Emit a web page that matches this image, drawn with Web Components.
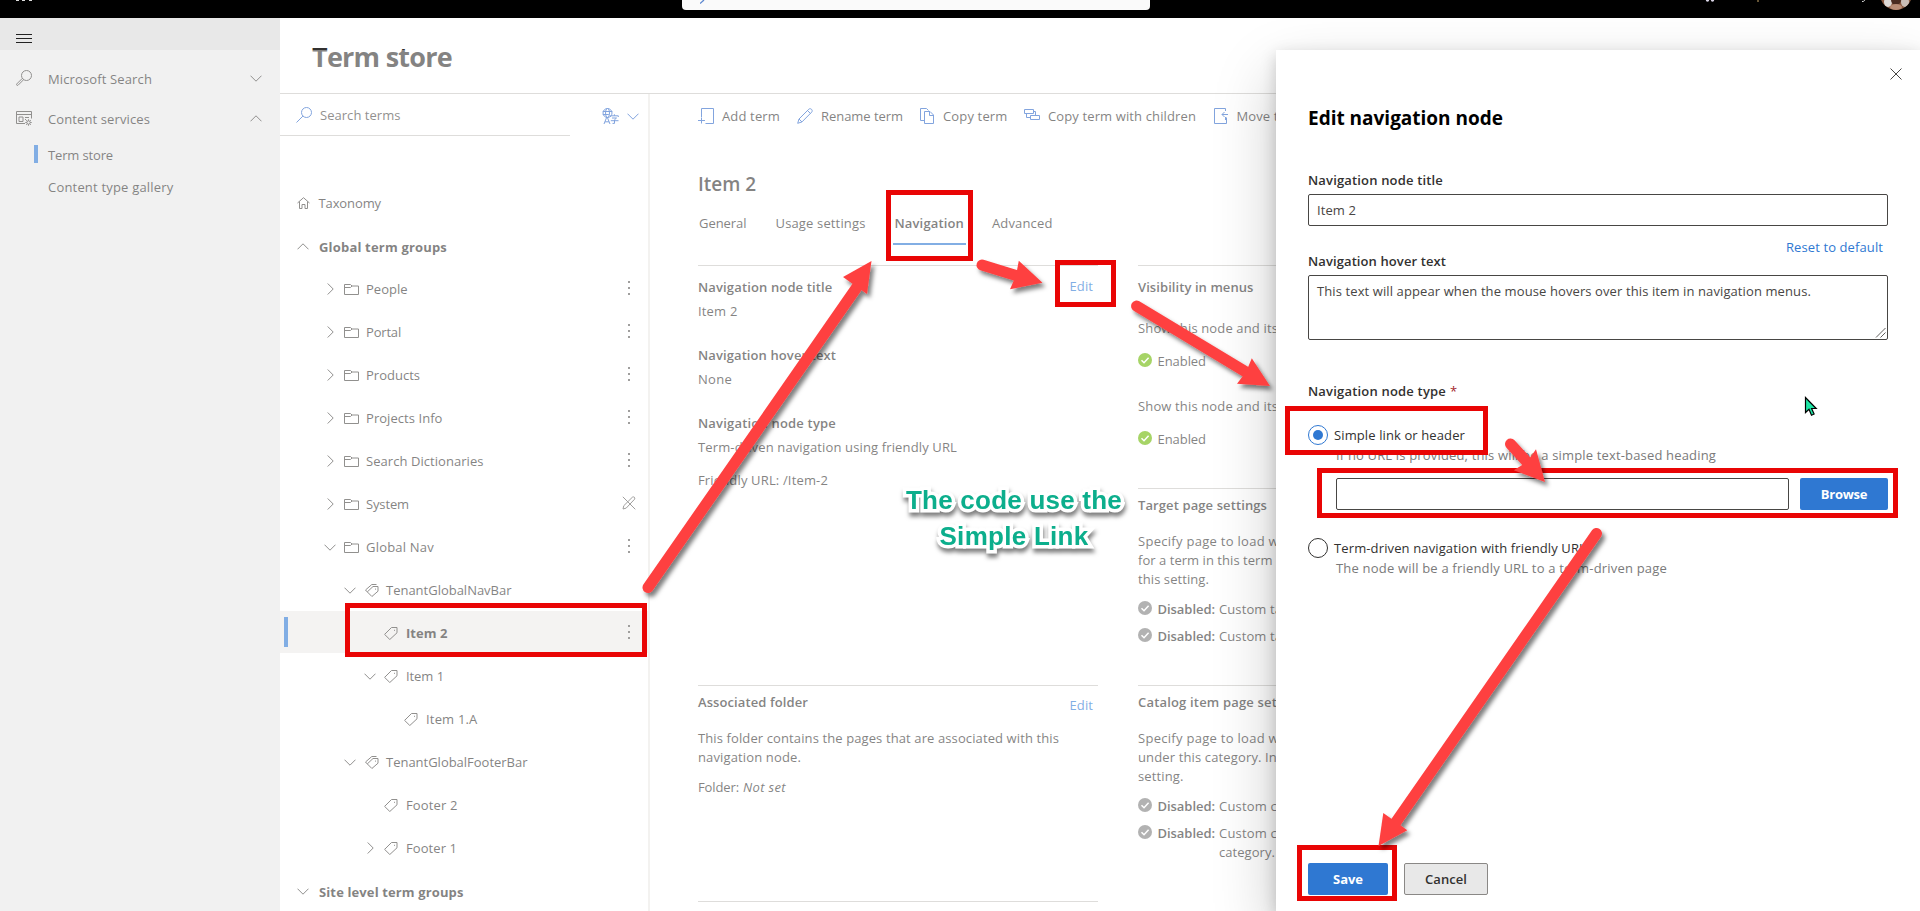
<!DOCTYPE html>
<html lang="en">
<head>
<meta charset="utf-8">
<title>Term store</title>
<style>
html,body{margin:0;padding:0;height:911px;overflow:hidden;background:#fff}
body{font:13px/20px "Open Sans","Noto Sans",sans-serif;color:#323130}
</style>
</head>
<body>
<term-app></term-app>
<script>
const define=(name,html,after)=>customElements.define(name,class extends HTMLElement{
  connectedCallback(){
    if(this.shadowRoot)return;
    this.attachShadow({mode:'open'}).innerHTML=typeof html==='function'?html(this):html;
    if(after)after(this);
  }
});

/* Text run spread to a given width through letter spacing */
const runs=[];
define('t-x',e=>`<style>:host{display:inline-block;white-space:pre;width:${e.getAttribute('w')}px;flex:none}</style><span><slot></slot></span>`,e=>runs.push(e));
const fitRuns=()=>runs.forEach(e=>{
  const s=e.shadowRoot.querySelector('span'),w=s.getBoundingClientRect().width,n=e.textContent.length;
  if(w)s.style.letterSpacing=((+e.getAttribute('w')-w)/n).toFixed(3)+'px';
});

const icons={
  down:[12,7,'<path d="M.5.7 6 6.2 11.5.7"/>'],
  up:[12,7,'<path d="M.5 6.3 6 .8l5.500 5.500"/>'],
  right:[7,12,'<path d="M.7.5 6.200 6 .7 11.500"/>'],
  menu:[16,9,'<path d="M0 .5h16M0 4.500h16M0 8.500h16"/>'],
  search:[16,16,'<circle cx="10.500" cy="5.500" r="5"/><path d="M6.900 9.100.5 15.500"/>'],
  glass:[16,16,'<circle cx="10.500" cy="5.500" r="5"/><path d="M6.400 8.300.7 14c-.5 1 .4 1.800 1.300 1.300l5.700-5.700"/>'],
  content:[16,15,'<path d="M9 12.500H.5V.5h15v7M.5 3.500h15M3 6h4v4.500H3zM9 6.500h4M9 8.500h1"/><circle cx="12.500" cy="11.500" r="1.700"/><path d="M12.500 8.300v1.500M12.500 13.200v1.500M9.300 11.500h1.500M14.200 11.500h1.500M10.200 9.200l1.100 1.100M13.700 12.700l1.100 1.100M10.200 13.800l1.100-1.100M13.700 10.300l1.100-1.100"/>'],
  home:[13,12,'<path d="M.5 6 6.500.7 12.500 6M2.500 4.500v7H5V7.500h3v4h2.500v-7"/>'],
  folder:[15,11,'<path d="M.5 10.500V.5h6l1.500 1.500h6.500v8.500zM.5 3.500h6l1.500-1.500"/>'],
  tag:[14,13,'<path d="M7.500.5h5.500v5.300L5.800 12.500.6 7.400z"/><path d="M10.500 2.800v1" />'],
  tags:[14,13,'<path d="M8 2.500h5v4.700L6.900 12.500 2.300 7.900z"/><path d="M11.500.5H6.800L.5 6l1.900 2M10.500 4.600v1"/>'],
  locked:[14,14,'<path d="M1 13l.8-3.300L10.400 1.200c1.500-1 3 .5 2.200 2L4.200 12.100zM.8.8l12.500 12.500"/>'],
  dots:[2,14,'<path d="M1 0v2M1 6v2M1 12v2" stroke-width="2"/>'],
  translate:[17,17,'<circle cx="5.500" cy="5" r="4.500"/><ellipse cx="5.500" cy="5" rx="2" ry="4.500"/><path d="M.8 3.500h9.500M.8 6.500h6M2 16l2.800-7h.4L8 16M3 13.800h4M8.500 9V7.800h7.800V9M12.400 6.300v1.500M10 10h4.500l-2 1.800v3.600h-2M8.800 12.700h7.700"/>'],
  add:[16,16,'<path d="M3.500 9V.5h12v15h-8M3.500 9.500v6M0 12.500h7"/>'],
  pen:[16,16,'<path d="M.7 15.300 2 11 11.800 1.200c1.800-1.600 4.500 1 2.900 2.900L5 13.900zM10.500 2.500l3 3M2 11l3 3"/>'],
  copy:[14,16,'<path d="M4.500 12.500h-4V.5h6l2 2M4.500 3.500h5.500l3.500 3.500v8.500h-9zM9.500 3.500V7.500h4"/>'],
  copytree:[17,12,'<path d="M.5.5h9v4h-9zM6.500 6.500h9v4h-9zM2.500 4.500v4h4M9.500 2.500h2v4"/>'],
  move:[15,16,'<path d="M11.500 3V.5H.5v15h11M11.500 9v3M8 6.500h6M10.500 4 8 6.500 10.500 9M12.500 9.500v6h-3"/>'],
  close:[12,12,'<path d="M.5.5l11 11M11.500.5l-11 11"/>'],
  ok:[14,14,'<circle cx="7" cy="7" r="7" fill="currentColor" stroke="none"/><path d="M3.500 7.300 6 9.700l4.600-5" stroke="#fff" stroke-width="1.500"/>'],
  grip:[11,11,'<path d="M1 10.500 10.500 1M5.500 10.500 10.500 5.500"/>']
};
define('ui-icon',e=>{const [w,h,p]=icons[e.getAttribute('name')];
  return `<style>:host{display:inline-flex;flex:none}svg{display:block}</style><svg width="${w}" height="${h}" viewBox="0 0 ${w} ${h}" fill="none" stroke="currentColor">${p}</svg>`});

define('top-bar',`<style>
:host{display:grid;grid-template-columns:682px 468px 1fr;height:18px;background:#000;position:relative;z-index:3;overflow:hidden}
.w{display:flex;gap:3.500px;padding-left:15.500px}.w i{width:3px;height:1px;background:#ddd}
.s{height:10px;background:#fafafa;border-radius:0 0 4px 4px}
.s svg{display:block;margin-left:18px}
.r{display:flex;justify-content:flex-end;padding-right:8px}.r svg{display:block}
</style><div class="w"><i></i><i></i><i></i></div><div class="s"><svg width="6" height="4"><path d="M0 3.500 4 0" stroke="#5b86cf" stroke-width="1.300"/></svg></div>
<div class="r"><svg width="222" height="12" viewBox="1690 0 222 12"><circle cx="1707.500" cy="0" r="1.700" fill="#dcd8ea"/><circle cx="1712.500" cy="0" r="1.700" fill="#d9d3e4"/><path d="M1757 1h2" stroke="#c9a86a"/><path d="M1862 1.500c2 0 2-.5 3-1.500" stroke="#ddd" fill="none"/>
<clipPath id="c"><circle cx="1896" cy="-6" r="16"/></clipPath><g clip-path="url(#c)"><path d="M1880-10h32v22h-32z" fill="#8a5a41"/><ellipse cx="1888" cy="2" rx="4" ry="5" fill="#ddd9d6"/><ellipse cx="1905" cy="2" rx="4" ry="5" fill="#c9bdb5"/><ellipse cx="1896" cy="0" rx="5" ry="5" fill="#4a2b20"/><ellipse cx="1896" cy="7" rx="6" ry="3" fill="#b98d76"/></g></svg></div>`);

define('side-nav',`<style>
:host{display:flex;flex-direction:column;background:#e8e8e8}
.m{height:32px;box-sizing:border-box;padding:16px 16px 0;display:flex}
.g{display:flex;align-items:center;height:40px;padding:0 18px 0 16px;color:#323130}
.g ui-icon:first-child{width:16px;margin-right:16px}
.g ui-icon:last-child{margin-left:auto}
.s{display:flex;align-items:center;height:32px;padding-left:34px}
.s i{width:4px;height:18px;margin-right:10px}.s i.on{background:#2f78d2}
t-x{padding-top:2px}
ui-icon{color:#484644}
</style><div class="m"><ui-icon name="menu" style="color:#222"></ui-icon></div>
<div class="g" style="margin-top:8px"><ui-icon name="glass"></ui-icon><t-x w="104">Microsoft Search</t-x><ui-icon name="down"></ui-icon></div>
<div class="g"><ui-icon name="content"></ui-icon><t-x w="102">Content services</t-x><ui-icon name="up"></ui-icon></div>
<div class="s"><i class="on"></i><t-x w="65">Term store</t-x></div>
<div class="s"><i></i><t-x w="125.500">Content type gallery</t-x></div>`);

define('tree-row',e=>{const a=n=>e.getAttribute(n),on=a('on')!==null,b=a('b')!==null;
 return `<style>:host{display:block;height:43px}
.r{display:flex;align-items:center;height:42px;box-sizing:border-box;padding:2px 17px 0 4px;${on?'background:#edebe9;':''}}
.b{width:4px;height:30px;margin-top:-2px;${on?'background:#2f78d2':''}}
.c{width:12px;display:flex;justify-content:center;margin-left:${a('x')-288}px;margin-right:${a('gap')||5}px}
.i{width:${a('icon')?a('iw')||20:0}px;display:flex;flex:none}.e{margin-left:auto;display:flex;width:14px;justify-content:center;margin-right:-5px;margin-top:-2px}
ui-icon{color:#484644}.e ui-icon{color:#605e5c}t-x{font-weight:${b?700:400};${b&&!on?'padding-top:1px':''}}</style>
<div class="r"><div class="b"></div><div class="c">${a('c')?`<ui-icon name="${a('c')}"></ui-icon>`:''}</div><div class="i">${a('icon')?`<ui-icon name="${a('icon')}"></ui-icon>`:''}</div><t-x w="${a('w')}"><slot></slot></t-x>${a('end')?`<div class="e"><ui-icon name="${a('end')}"></ui-icon></div>`:''}</div>`},
 e=>{const t=e.shadowRoot.querySelector('t-x');t.textContent=e.textContent;});

define('term-tree',`<style>:host{display:block;border-right:2px solid #ebe9e7}
.s{display:flex;align-items:center;height:42px;box-sizing:border-box;width:289.500px;border-bottom:1px solid #c8c6c4;padding-left:16px;gap:8px}
.top{display:flex;height:87px}.t{display:flex;align-items:center;gap:8px;height:44px;margin-left:32px;color:#2f68c8}
.s ui-icon{color:#2f68c8}.s t-x{color:#484644}</style>
<div class="top"><div class="s"><ui-icon name="search"></ui-icon><t-x w="80.500">Search terms</t-x></div><div class="t"><ui-icon name="translate"></ui-icon><ui-icon name="down"></ui-icon></div></div>
<tree-row x="297" c="home" gap="9.500" w="62.500">Taxonomy</tree-row>
<tree-row x="297" c="up" gap="10" w="128" b>Global term groups</tree-row>
<tree-row x="324" c="right" gap="7.500" icon="folder" iw="22.500" end="dots" w="41.500">People</tree-row>
<tree-row x="324" c="right" gap="7.500" icon="folder" iw="22.500" end="dots" w="35">Portal</tree-row>
<tree-row x="324" c="right" gap="7.500" icon="folder" iw="22.500" end="dots" w="54">Products</tree-row>
<tree-row x="324" c="right" gap="7.500" icon="folder" iw="22.500" end="dots" w="76.500">Projects Info</tree-row>
<tree-row x="324" c="right" gap="7.500" icon="folder" iw="22.500" end="dots" w="117.500">Search Dictionaries</tree-row>
<tree-row x="324" c="right" gap="7.500" icon="folder" iw="22.500" end="locked" w="43">System</tree-row>
<tree-row x="324" c="down" gap="7.500" icon="folder" iw="22.500" end="dots" w="68">Global Nav</tree-row>
<tree-row x="344" c="down" gap="8.500" icon="tags" iw="21.500" w="125.500">TenantGlobalNavBar</tree-row>
<tree-row x="364" gap="8" icon="tag" iw="22" end="dots" w="41.500" b on>Item 2</tree-row>
<tree-row x="364" c="down" gap="8" icon="tag" iw="22" w="38">Item 1</tree-row>
<tree-row x="384" gap="8" icon="tag" iw="22" w="51.500">Item 1.A</tree-row>
<tree-row x="344" c="down" gap="8.500" icon="tags" iw="21.500" w="141.500">TenantGlobalFooterBar</tree-row>
<tree-row x="364" gap="8" icon="tag" iw="22" w="51.500">Footer 2</tree-row>
<tree-row x="364" c="right" gap="8" icon="tag" iw="22" w="51">Footer 1</tree-row>
<tree-row x="297" c="down" gap="10" w="144.500" b>Site level term groups</tree-row>`);

define('info-field',e=>`<style>:host{display:block;height:68px}b{font-weight:550;display:block;height:24px}</style><b><t-x w="${e.getAttribute('lw')}">${e.getAttribute('label')}</t-x></b><slot></slot>`);
define('info-card',e=>`<style>:host{display:block;border-top:1px solid #c8c6c4;box-sizing:border-box;height:${e.getAttribute('h')}px;padding-top:${e.getAttribute('p')||6}px}
.h{display:flex;justify-content:space-between;height:20px;margin-bottom:${e.getAttribute('mb')||17}px}b{font-weight:550}a{color:#2f78d2;margin:${e.getAttribute('et')||0}px 5px 0 0}</style>
<div class="h"><b><t-x w="${e.getAttribute('tw')}">${e.getAttribute('head')}</t-x></b>${e.getAttribute('et')?'<a><t-x w="23.500">Edit</t-x></a>':''}</div><slot></slot>`);
define('status-line',e=>`<style>:host{display:flex;height:20px;align-items:center}ui-icon{color:${e.getAttribute('c')};margin:0 5.500px 0 0;position:relative;top:-1px}b{font-weight:600;margin-right:4px}</style><ui-icon name="ok"></ui-icon>${e.getAttribute('b')!==null?'<b><t-x w="57.500">Disabled:</t-x></b>':''}<slot></slot>`);

define('term-detail',`<style>:host{display:block;padding-left:48px;overflow:hidden;white-space:nowrap}
.bar{display:flex;height:44px;align-items:center}.bar div{display:flex;align-items:center;flex:none}.bar ui-icon{color:#2f68c8}
.bar t-x{color:#323130}
h2{margin:32px 0 0;font:550 19px/28px "Open Sans",sans-serif;height:28px}
.tabs{display:flex;height:67px;box-sizing:border-box;padding-top:13px;margin-left:1px}
.tabs div{height:26px;padding-top:2px;margin-right:29px}
.tabs .on{font-weight:550;border-bottom:2px solid #2f78d2;padding:2px 2px 0;margin:0 26px 0 -2px;height:30px}
.cols{display:grid;grid-template-columns:400px 400px;gap:40px}
p{margin:0;line-height:19px}
</style>
<div class="bar"><div style="width:99px"><ui-icon name="add" style="margin-right:8px"></ui-icon><t-x w="58">Add term</t-x></div>
<div style="width:123px"><ui-icon name="pen" style="margin-right:8px"></ui-icon><t-x w="82">Rename term</t-x></div>
<div style="width:104px"><ui-icon name="copy" style="margin-right:9px"></ui-icon><t-x w="64.500">Copy term</t-x></div>
<div style="width:190px"><ui-icon name="copytree" style="margin-right:7px;position:relative;top:-1px"></ui-icon><t-x w="148">Copy term with children</t-x></div>
<div><ui-icon name="move" style="margin-right:7.500px"></ui-icon><t-x w="42">Move t</t-x></div></div>
<h2><t-x w="58">Item 2</t-x></h2>
<div class="tabs"><div><t-x w="47.500">General</t-x></div><div><t-x w="90">Usage settings</t-x></div><div class="on"><t-x w="69.500">Navigation</t-x></div><div><t-x w="60.500">Advanced</t-x></div></div>
<div class="cols"><div>
<info-card h="420" p="11" mb="4" et="-1" tw="134.500" head="Navigation node title"><div style="height:44px"><t-x w="39.500">Item 2</t-x></div>
<info-field label="Navigation hover text" lw="138"><t-x w="34">None</t-x></info-field>
<info-field label="Navigation node type" lw="138"><t-x w="259">Term-driven navigation using friendly URL</t-x><div style="margin-top:13px"><t-x w="130">Friendly URL: /Item-2</t-x></div></info-field></info-card>
<info-card h="216" et="3" tw="110" head="Associated folder"><p><t-x w="361">This folder contains the pages that are associated with this</t-x></p><p><t-x w="103">navigation node.</t-x></p><p style="margin-top:11px;display:flex;gap:4px"><t-x w="41">Folder:</t-x><i><t-x w="43">Not set</t-x></i></p></info-card>
<info-card h="20" tw="1" head=""></info-card>
</div><div>
<info-card h="223" p="11" mb="22" tw="115.500" head="Visibility in menus"><p><t-x w="140">Show this node and its</t-x></p><status-line c="#6bb700" style="margin-top:13px"><t-x w="48.500">Enabled</t-x></status-line><p style="margin-top:26px"><t-x w="140">Show this node and its</t-x></p><status-line c="#6bb700" style="margin-top:13px"><t-x w="48.500">Enabled</t-x></status-line></info-card>
<info-card h="197" tw="129" head="Target page settings"><p><t-x w="141">Specify page to load w</t-x></p><p><t-x w="134.500">for a term in this term</t-x></p><p><t-x w="71">this setting.</t-x></p><status-line b c="#7f7f7f" style="margin-top:10px"><t-x w="63">Custom ta</t-x></status-line><status-line b c="#7f7f7f" style="margin-top:7px"><t-x w="63">Custom ta</t-x></status-line></info-card>
<info-card h="226" tw="139" head="Catalog item page set"><p><t-x w="141">Specify page to load w</t-x></p><p><t-x w="139">under this category. In</t-x></p><p><t-x w="45.500">setting.</t-x></p><status-line b c="#7f7f7f" style="margin-top:10px"><t-x w="58">Custom c</t-x></status-line><status-line b c="#7f7f7f" style="margin-top:7px"><t-x w="58">Custom c</t-x></status-line><p style="padding-left:81px"><t-x w="56">category.</t-x></p></info-card>
</div></div>`);

define('radio-row',e=>`<style>:host{display:flex;height:20px;align-items:center}
i{box-sizing:border-box;width:20px;height:20px;border-radius:50%;border:1px solid ${e.hasAttribute('on')?'#2f78d2':'#323130'};margin-right:6px;display:grid;place-items:center}
i::after{content:"";width:10px;height:10px;border-radius:50%;background:${e.hasAttribute('on')?'#2f78d2':'none'}}</style><i></i><slot></slot>`);
define('ui-button',`<style>:host{display:flex;align-items:center;justify-content:center;box-sizing:border-box;height:32px;border-radius:2px;background:#2f78d2;color:#fff;font-weight:700}
:host([plain]){background:#e8e8e8;border:1px solid #8a8886;color:#323130;font-weight:600}</style><slot></slot>`);

define('edit-panel',`<style>:host{position:absolute;top:50px;right:0;bottom:0;width:644px;box-sizing:border-box;padding:18px 32px 16px;background:#fff;display:flex;flex-direction:column;box-shadow:0 26px 58px rgba(0,0,0,.22),0 5px 15px rgba(0,0,0,.18)}
.x{display:flex;justify-content:flex-end;margin-right:-14px;height:12px;color:#484644}
h1{margin:24px 0 38px;font:700 19px/28px "Open Sans",sans-serif;color:#000}
label{font-weight:550;display:block;height:20px}
.in{box-sizing:border-box;border:1px solid #484644;border-radius:2px;height:32px;padding:5px 8px;margin-top:4px;position:relative;color:#484644}
.in.a{height:65px}.in ui-icon{position:absolute;right:1px;bottom:1px;color:#605e5c}
.rs{text-align:right;color:#2f78d2;margin:11px 5px 0 0;height:14px}
.h{color:#7a7a7a;padding-left:28px;height:20px}
.u{display:grid;grid-template-columns:453px 88px;gap:11px;margin:13px 0 28px 28px}.u .in{margin:0}
.f{display:flex;gap:16px;margin-top:auto}
</style>
<div class="x"><ui-icon name="close"></ui-icon></div>
<h1><t-x w="195">Edit navigation node</t-x></h1>
<label><t-x w="135">Navigation node title</t-x></label>
<div class="in"><t-x w="39">Item 2</t-x></div>
<div class="rs"><t-x w="97">Reset to default</t-x></div>
<label><t-x w="138">Navigation hover text</t-x></label>
<div class="in a"><t-x w="494">This text will appear when the mouse hovers over this item in navigation menus.</t-x><ui-icon name="grip"></ui-icon></div>
<label style="margin-top:41px"><t-x w="138">Navigation node type</t-x><span style="color:#a4262c;margin-left:4px;font-weight:400">*</span></label>
<radio-row on style="margin-top:24px"><t-x w="131">Simple link or header</t-x></radio-row>
<div class="h"><t-x w="380">If no URL is provided, this will be a simple text-based heading</t-x></div>
<div class="u"><div class="in"></div><ui-button><t-x w="46.500">Browse</t-x></ui-button></div>
<radio-row><t-x w="252">Term-driven navigation with friendly URL</t-x></radio-row>
<div class="h"><t-x w="331">The node will be a friendly URL to a term-driven page</t-x></div>
<div class="f"><ui-button style="width:80px"><t-x w="30">Save</t-x></ui-button><ui-button plain style="width:84px"><t-x w="42">Cancel</t-x></ui-button></div>`);

/* Free-canvas markup: boxes, arrows, callout and pointer */
const arrow=(x,y,bx,by,tx,ty,ax,ay,cx,cy)=>`<g filter="url(#s)"><path d="M${x} ${y}L${bx} ${by}" stroke="#fe4141" stroke-width="11" stroke-linecap="round"/><path d="M${tx} ${ty}L${ax} ${ay}L${bx} ${by}L${cx} ${cy}z" fill="#fe4141"/></g>`;
const box=(x,y,x2,y2)=>`<rect x="${x+2.5}" y="${y+2.5}" width="${x2-x-5}" height="${y2-y-5}" fill="none" stroke="#e90505" stroke-width="5"/>`;
define('mark-up',`<style>:host{position:absolute;inset:0;z-index:4}svg{position:absolute;inset:0}
.c{position:absolute;left:904px;top:482px;width:220px;display:flex;flex-direction:column;align-items:center;font:700 26px/36px "Liberation Sans",sans-serif;color:#0cae8c;-webkit-text-stroke:7px #fff;paint-order:stroke fill;stroke-linejoin:round;filter:drop-shadow(1px 4px 2px rgba(0,0,0,.5))}</style>
<svg width="1920" height="911"><filter id="s" x="-20%" y="-20%" width="140%" height="150%"><feDropShadow dx="3" dy="4" stdDeviation="2.200" flood-color="#000" flood-opacity=".5"/></filter>
${box(345,603,647,657)}${box(886,190,973,261)}${box(1055,260,1116,307)}${box(1285,406,1488,455)}${box(1317,468,1898,518)}${box(1297,845,1397,901)}
${arrow(648,587.5,857,287,871.5,261,843,277,867,294)}
${arrow(982,265,1016,275.5,1042.5,282.700,1018.800,260.700,1010,289.300)}
${arrow(1136.500,306,1246,372,1270,386,1251.800,358.300,1237,383.700)}
${arrow(1510.500,444,1527,462,1545,482,1536,449.300,1513.800,470.300)}
${arrow(1596.500,533.500,1396,822,1378.500,846,1383.300,813,1407.300,830.300)}
<path d="M1805.500 397.500v15l3.500-3.300 2.500 6 2.600-1.200-2.500-5.500h4.600z" fill="#1ee6a6" stroke="#000" stroke-width="1.200"/></svg>
<div class="c"><t-x w="216">The code use the</t-x><t-x w="149">Simple Link</t-x></div>`);

define('term-app',`<style>:host{display:grid;grid-template:18px 893px/280px 1fr;position:relative;width:1920px;height:911px;overflow:hidden}
top-bar{grid-column:1/3}
main{display:grid;grid-template:76px 1fr/370px 1fr;min-width:0}
header{grid-column:1/3;border-bottom:1px solid #c8c6c4;padding:20px 0 0 32px;font:700 27px/38px "Open Sans",sans-serif;box-sizing:border-box}
.o{position:absolute;inset:50px 0 0;background:rgba(255,255,255,.4)}
</style><top-bar></top-bar><side-nav></side-nav><main><header><t-x w="140">Term store</t-x></header><term-tree></term-tree><term-detail></term-detail></main><div class="o"></div><edit-panel></edit-panel><mark-up></mark-up>`,
 e=>{});
fitRuns();
</script>
</body>
</html>
